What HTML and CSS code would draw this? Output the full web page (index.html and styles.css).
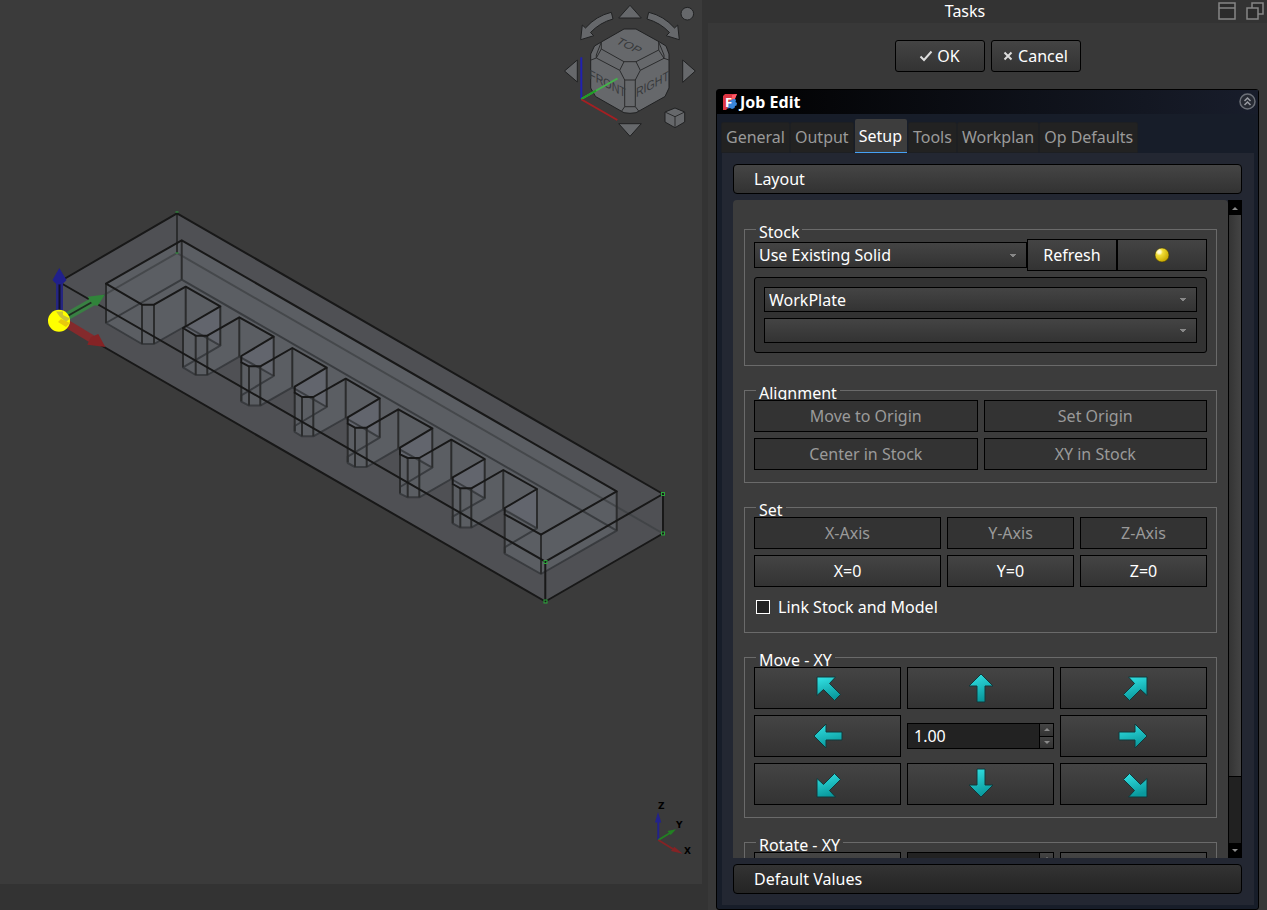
FILE: index.html
```html
<!DOCTYPE html>
<html lang="en">
<head>
<meta charset="utf-8">
<title>Job Edit</title>
<link rel="stylesheet" href="styles.css">
</head>
<body>
<div class="app">
  <main class="viewport">
    <svg class="scene" viewBox="0 0 702 884" preserveAspectRatio="xMinYMin meet" role="img" aria-label="3D view">
      <defs>
        <path id="outline" d="M181.7 240.3L106 283.7L142 304.7H154L185.7 286.7L220.3 306.3L183 328L195.7 335.7H207.3L239.3 317.3L273.7 336.7L241.3 356V362.3L249 366.3H260.3L292.3 348L326.7 367.7L294.7 386.7V392.7L302 397H313.3L345.7 378.7L379.7 398.3L347.7 417.3V423.7L355 427.7H366.7L398.3 409.3L432.3 428.3L400 447.7V454.3L407.7 458H419.3L451.3 439.7L484.7 459L452.7 477.3V484L460.3 488.3H471.3L503.3 470L537 489L504.7 508V514.3L541 534.7L616.7 491.3Z"/>
      </defs>
      <path class="stock" d="M59 282L177 213.3L663 494V533.5L545.3 601.5L59 321Z"/>
      <g class="part">
        <use href="#outline"/>
        <use href="#outline" y="39.3"/>
        <path d="M106 283.7L142 304.7H154L185.7 286.7L220.3 306.3V345.6L185.7 326L154 344H142L106 323Z"/>
        <path d="M183 328L195.7 335.7H207.3L239.3 317.3L273.7 336.7V376L239.3 356.6L207.3 375H195.7L183 367.3Z"/>
        <path d="M241.3 362.3L249 366.3H260.3L292.3 348L326.7 367.7V407L292.3 387.3L260.3 405.6H249L241.3 401.6Z"/>
        <path d="M294.7 392.7L302 397H313.3L345.7 378.7L379.7 398.3V437.6L345.7 418L313.3 436.3H302L294.7 432Z"/>
        <path d="M347.7 423.7L355 427.7H366.7L398.3 409.3L432.3 428.3V467.6L398.3 448.6L366.7 467H355L347.7 463Z"/>
        <path d="M400 454.3L407.7 458H419.3L451.3 439.7L484.7 459V498.3L451.3 479L419.3 497.3H407.7L400 493.6Z"/>
        <path d="M452.7 484L460.3 488.3H471.3L503.3 470L537 489V528.3L503.3 509.3L471.3 527.6H460.3L452.7 523.3Z"/>
        <path d="M504.7 514.3L541 534.7L616.7 491.3V530.6L541 574L504.7 553.6Z"/>
        <path d="M181.7 240.3V279.6L106 323V283.7ZM181.7 240.3L616.7 491.3V530.6L181.7 279.6Z"/>
      </g>
      <g class="wall">
        <path d="M220.3 306.3L183 328L195.7 335.7H207.3L220.3 345.6Z"/>
        <path d="M273.7 336.7L241.3 356V362.3L249 366.3H260.3L273.7 376Z"/>
        <path d="M326.7 367.7L294.7 386.7V392.7L302 397H313.3L326.7 407Z"/>
        <path d="M379.7 398.3L347.7 417.3V423.7L355 427.7H366.7L379.7 437.6Z"/>
        <path d="M432.3 428.3L400 447.7V454.3L407.7 458H419.3L432.3 467.6Z"/>
        <path d="M484.7 459L452.7 477.3V484L460.3 488.3H471.3L484.7 498.3Z"/>
        <path d="M537 489L504.7 508L537 528.3Z"/>
      </g>
      <path class="edge-faint" d="M59 321L177 253L663 533.5M177 253V213"/>
      <use class="edge-hidden" href="#outline" y="39.3"/>
      <path class="edge-side" d="M106 283.7v39.3M142 304.7v39.3M154 304.7v39.3M185.7 286.7v39.3M220.3 306.3v39.3M183 328v39.3M195.7 335.7v39.3M207.3 335.7v39.3M239.3 317.3v39.3M273.7 336.7v39.3M241.3 362v39.3M249 366.3v39.3M260.3 366.3v39.3M292.3 348v39.3M326.7 367.7v39.3M294.7 392v39.3M302 397v39.3M313.3 397v39.3M345.7 378.7v39.3M379.7 398.3v39.3M347.7 423v39.3M355 427.7v39.3M366.7 427.7v39.3M398.3 409.3v39.3M432.3 428.3v39.3M400 454v39.3M407.7 458v39.3M419.3 458v39.3M451.3 439.7v39.3M484.7 459v39.3M452.7 484v39.3M460.3 488.3v39.3M471.3 488.3v39.3M503.3 470v39.3M537 489v39.3M504.7 514v39.3M541 534.7v39.3M616.7 491.3v39.3M181.7 240.3v39.3M177 213v40"/>
      <use class="edge" href="#outline"/>
      <path class="edge" d="M59 282L177 213.3L663 494V533.5L545.3 601.5L59 321M59 282L545.3 561.7L663 494M545.3 561.7V601.5"/>
      <g class="vertex"><path d="M175.500 212h3M175.500 253h3"/><rect x="661.500" y="492.500" width="3" height="3"/><rect x="661.500" y="532" width="3" height="3"/><rect x="544" y="560.500" width="3" height="3"/><rect x="544" y="600" width="3" height="3"/></g>

      <g class="origin">
        <path d="M64 318L94 301" stroke="#398043" stroke-width="8"/>
        <path d="M64 318L94 301" stroke="#202b22" stroke-width="2"/>
        <path d="M105 294.500L87.700 296.700L93 305L97.700 305.700Z" fill="#30843a"/>
        <path d="M64 322L92 339" stroke="#842a2c" stroke-width="8"/>
        <path d="M105.300 347L98.300 334L91 337L87.300 344.700Z" fill="#852325"/>
        <path d="M59.500 283V314" stroke="#252580" stroke-width="7"/>
        <path d="M59.500 284V312" stroke="#111126" stroke-width="2"/>
        <path d="M59.300 268L52.500 280Q59 289 66.500 280Z" fill="#20208c"/>
        <circle cx="59" cy="320.700" r="11" fill="#ffff00"/>
        <path d="M56 311.500H63V315L70 318.500L66 322L60 317Z" fill="#cdc634"/>
        <path d="M61 319L70 323L66 327L58 322Z" fill="#e9c90c"/>
      </g>

      <g class="nav">
        <path d="M630 5.300L641.300 18H618.700Z"/>
        <path d="M618.700 123.700H641.300L630 136.300Z"/>
        <path d="M564.500 71L577.300 60V82Z"/>
        <path d="M682.700 60L695.300 71L682.700 82.300Z"/>
        <circle cx="687.300" cy="13.700" r="6.300"/>
        <path d="M611.300 12.300Q596 16 585.500 28L582.300 25L580.700 39.700L593.700 35.700L590.500 32.500Q600 22.500 613 19Z"/>
        <path d="M648.700 12.300Q664 16 674.500 28L677.700 25L679.300 39.700L666.300 35.700L669.500 32.500Q660 22.500 647 19Z"/>
        <path d="M624 29H636L659.500 42L666 46L669 54V88L665 96.500L636 112.700L630 113.300L624 112.700L595.500 96.500L590.700 88V54L594.500 46L601.300 42Z"/>
        <g class="nav-lines">
          <path d="M601.300 42V49L624 61.700H636L658.700 50V42"/>
          <path d="M601.300 49L596.300 58L591 60M596.300 58L619.700 70.300L624 61.700M596.300 58V55L601.300 42"/>
          <path d="M658.700 50L664 58.300L669 60M664 58.300L640.300 70.300L636 61.700M664 58.300V55L658.700 42"/>
          <path d="M619.700 70.300L624.700 80H635.300L640.300 70.300M624.700 80V106.700H635.300V80M624.700 106.700L621.700 111M635.300 106.700L638.700 111"/>
        </g>
        <path d="M675 108L684.700 112V122L675 127.700L665 122V112Z"/>
        <path class="nav-lines" d="M665 112L675 116.700L684.700 112M675 116.700V127.700"/>
        <text class="nav-text" transform="matrix(.87 .42 -.6 .6 629 46)" y="4">TOP</text>
        <text class="nav-text" transform="matrix(.82 .44 0 1 607.500 83)" y="5">FRONT</text>
        <text class="nav-text" transform="matrix(.82 -.44 0 1 652.500 83.500)" y="5">RIGHT</text>
        <g class="nav-axes">
          <path d="M581.300 99V57.300" stroke="#2020b0"/>
          <path d="M581.300 99L617.500 78.500" stroke="#44b34b"/>
          <path d="M581.300 99L596 90.700" stroke="#1f9f24"/>
          <path d="M581.500 99.500L617.300 120" stroke="#a51f22"/>
        </g>
      </g>

      <g class="axes">
        <path d="M658.300 840V820" stroke="#22228c"/><path d="M658 812L655 822.500H661.300Z" fill="#22228c"/>
        <path d="M658.300 840L670 833" stroke="#228022"/><path d="M676 829.300L667.500 831L670.700 835Z" fill="#228022"/>
        <path d="M658.300 840L673 849" stroke="#852325"/><path d="M682.700 853.700L674.300 846.700L671 851Z" fill="#852325"/>
        <text x="658" y="809">Z</text><text x="676" y="828">Y</text><text x="684" y="854">X</text>
      </g>
    </svg>
  </main>

  <aside class="dock">
    <header class="dock-title">
      <h1>Tasks</h1>
      <button class="dock-btn" type="button" aria-label="Shade"><svg width="18" height="18" viewBox="0 0 18 18"><path d="M1 1H17V17H1Z" fill="#2b2b2b" stroke="#868686" stroke-width="1.500"/><path d="M1 6H17" stroke="#868686" stroke-width="1.500"/></svg></button>
      <button class="dock-btn" type="button" aria-label="Float"><svg width="18" height="18" viewBox="0 0 18 18"><path d="M6 1H17V12H6Z" fill="#2b2b2b" stroke="#868686" stroke-width="1.500"/><path d="M1 6H12V17H1Z" fill="#2b2b2b" stroke="#868686" stroke-width="1.500"/></svg></button>
    </header>
    <div class="dock-body">
      <div class="actions">
        <button class="btn round" type="button"><svg width="14" height="12" viewBox="0 0 14 12"><path d="M1.500 6.500L5 10L12.500 1.500" fill="none" stroke="#ddd" stroke-width="2"/></svg>OK</button>
        <button class="btn round cancel" type="button"><svg width="10" height="10" viewBox="0 0 10 10"><path d="M1.500 1.500L8.500 8.500M8.500 1.500L1.500 8.500" stroke="#ddd" stroke-width="2"/></svg>Cancel</button>
      </div>

      <section class="job">
        <header class="job-head">
          <svg class="logo" width="14" height="16" viewBox="0 0 14 16"><path d="M2 0H14L12 4L10 8L5 14L3 16H0V2Z" fill="#dd3643"/><path d="M9 5.500L11.500 4.500L13 6L12.500 8L14 9L13.500 11.500L12 12L11.500 14L9 15L7 14L4.500 14.500V9Z" fill="#3a86d9"/><path d="M9 1L14 0L12 5H9Z" fill="#ff5a66"/><text x="2" y="13" class="logo-f">F</text></svg>
          <h2>Job Edit</h2>
          <button class="collapse" type="button" aria-label="Collapse"><svg width="17" height="17" viewBox="0 0 17 17"><circle cx="8.500" cy="8.500" r="7.500" fill="#262a33" stroke="#6c7078" stroke-width="1.500"/><path d="M5.500 8L8.500 5L11.500 8M5.500 12L8.500 9L11.500 12" fill="none" stroke="#999ca3" stroke-width="1.500"/></svg></button>
        </header>
        <nav class="tabs" role="tablist">
          <button type="button" role="tab">General</button>
          <button type="button" role="tab">Output</button>
          <button type="button" role="tab" aria-selected="true">Setup</button>
          <button type="button" role="tab">Tools</button>
          <button type="button" role="tab">Workplan</button>
          <button type="button" role="tab">Op Defaults</button>
        </nav>
        <div class="pane">
          <button class="section-btn" type="button">Layout</button>
          <div class="scroll">
            <div class="scroll-view">
              <fieldset class="group">
                <legend>Stock</legend>
                <div class="stock-row">
                  <select class="combo tall" aria-label="Stock source"><option>Use Existing Solid</option></select>
                  <button class="btn" type="button">Refresh</button>
                  <button class="btn" type="button" aria-label="Stock color"><svg width="16" height="16" viewBox="0 0 16 16"><defs><radialGradient id="ball" cx=".3" cy=".28" r=".75"><stop offset="0" stop-color="#fff"/><stop offset=".18" stop-color="#fff7b0"/><stop offset=".35" stop-color="#f0dc35"/><stop offset="1" stop-color="#c9a800"/></radialGradient></defs><circle cx="8" cy="8" r="7" fill="url(#ball)" stroke="#3a3200" stroke-width=".5"/></svg></button>
                </div>
                <div class="frame">
                  <select class="combo" aria-label="Solid"><option>WorkPlate</option></select>
                  <select class="combo" aria-label="Sub solid"><option></option></select>
                </div>
              </fieldset>

              <fieldset class="group">
                <legend>Alignment</legend>
                <div class="grid two">
                  <button class="btn" type="button" disabled>Move to Origin</button>
                  <button class="btn" type="button" disabled>Set Origin</button>
                  <button class="btn" type="button" disabled>Center in Stock</button>
                  <button class="btn" type="button" disabled>XY in Stock</button>
                </div>
              </fieldset>

              <fieldset class="group">
                <legend>Set</legend>
                <div class="grid set">
                  <button class="btn" type="button" disabled>X-Axis</button>
                  <button class="btn" type="button" disabled>Y-Axis</button>
                  <button class="btn" type="button" disabled>Z-Axis</button>
                  <button class="btn" type="button">X=0</button>
                  <button class="btn" type="button">Y=0</button>
                  <button class="btn" type="button">Z=0</button>
                </div>
                <label class="check"><input type="checkbox">Link Stock and Model</label>
              </fieldset>

              <fieldset class="group">
                <legend>Move - XY</legend>
                <div class="grid three">
                  <button class="btn big" type="button" aria-label="Up left"><svg class="arrow" viewBox="0 0 32 32"><defs><linearGradient id="teal" x1="0" y1="0" x2=".3" y2="1"><stop offset="0" stop-color="#34e4e6"/><stop offset="1" stop-color="#0a9a9e"/></linearGradient></defs><path d="M5 5H23.500L17.500 11.500L28.500 22.500L22.500 28.500L11.500 17.500L5 23.500Z"/></svg></button>
                  <button class="btn big" type="button" aria-label="Up"><svg class="arrow" viewBox="0 0 32 32"><path d="M16 2L28 14H20V30H12V14H4Z"/></svg></button>
                  <button class="btn big" type="button" aria-label="Up right"><svg class="arrow" viewBox="0 0 32 32"><path d="M29 5H10.500L16.500 11.500L5.500 22.500L11.500 28.500L22.500 17.500L29 23.500Z"/></svg></button>
                  <button class="btn big" type="button" aria-label="Left"><svg class="arrow" viewBox="0 0 32 32"><path d="M2 16L14 4V12H30V20H14V28Z"/></svg></button>
                  <div class="spin"><input type="text" inputmode="decimal" value="1.00" aria-label="Move distance"><span class="spin-btns"><button type="button" aria-label="Increase"><i class="tri up"></i></button><button type="button" aria-label="Decrease"><i class="tri down"></i></button></span></div>
                  <button class="btn big" type="button" aria-label="Right"><svg class="arrow" viewBox="0 0 32 32"><path d="M29 16L17 4V12H1V20H17V28Z"/></svg></button>
                  <button class="btn big" type="button" aria-label="Down left"><svg class="arrow" viewBox="0 0 32 32"><path d="M5 29H23.500L17.500 22.500L28.500 11.500L22.500 5.500L11.500 16.500L5 10.500Z"/></svg></button>
                  <button class="btn big" type="button" aria-label="Down"><svg class="arrow" viewBox="0 0 32 32"><path d="M16 29L28 17H20V1H12V17H4Z"/></svg></button>
                  <button class="btn big" type="button" aria-label="Down right"><svg class="arrow" viewBox="0 0 32 32"><path d="M29 29H10.500L16.500 22.500L5.500 11.500L11.500 5.500L22.500 16.500L29 10.500Z"/></svg></button>
                </div>
              </fieldset>

              <fieldset class="group">
                <legend>Rotate - XY</legend>
                <div class="grid three top">
                  <button class="btn big" type="button" aria-label="Rotate left"></button>
                  <div class="spin"><input type="text" inputmode="decimal" aria-label="Rotate angle"><span class="spin-btns"><button type="button" aria-label="Increase"><i class="tri up"></i></button><button type="button" aria-label="Decrease"><i class="tri down"></i></button></span></div>
                  <button class="btn big" type="button" aria-label="Rotate right"></button>
                </div>
              </fieldset>
            </div>
            <div class="scrollbar" aria-hidden="true">
              <span class="sb-end"><i class="tri up"></i></span>
              <span class="sb-thumb"></span>
              <span class="sb-track"></span>
              <span class="sb-end"><i class="tri down"></i></span>
            </div>
          </div>
          <button class="section-btn dark" type="button">Default Values</button>
        </div>
      </section>
    </div>
  </aside>
</div>
</body>
</html>
```
FILE: styles.css
```css
* { box-sizing: border-box; }

body {
  margin: 0;
  background: #333;
  color: #fff;
  font: 16px/22px "Noto Sans", sans-serif;
}

button, input, select { font: inherit; color: inherit; margin: 0; }
h1, h2 { margin: 0; font-size: 16px; }

.app {
  display: grid;
  grid-template-columns: 702fr 559fr;
  gap: 6px;
  height: 100vh;
}

/* 3D view */
.viewport { margin-bottom: 26px; background: #3b3b3b; overflow: hidden; min-width: 0; }
.scene { display: block; width: 100%; height: 100%; }
.stock { fill: #4f5054; }
.part { fill: #5b5e63; }
.wall { fill: #62656d; }
.edge, .edge-side, .edge-hidden, .edge-faint { fill: none; stroke: #181818; stroke-width: 2; stroke-linejoin: round; }
.edge-side { stroke: #2b2c2d; }
.edge-hidden { stroke: #34363a; stroke-opacity: .85; }
.edge-faint { stroke: #3c3f42; stroke-opacity: .7; }
.vertex { fill: none; stroke: #2aa53a; }
.nav > path, .nav > circle { fill: #66686b; stroke: #202122; stroke-width: 1; }
.nav > path.nav-lines, .nav-lines { fill: none; stroke: #2a2b2c; stroke-width: 1; }
.nav-text { font: 13px "Liberation Sans", sans-serif; fill: #37393b; text-anchor: middle; }
.nav-axes { fill: none; stroke-width: 2; }
.axes path { stroke-width: 2; }
.axes text { font: bold 9px "DejaVu Sans", sans-serif; fill: #000; }

/* Dock */
.dock { display: flex; flex-direction: column; min-width: 0; min-height: 0; }
.dock-title { display: flex; align-items: center; gap: 10px; height: 23px; padding: 0 3px 2px 14px; }
.dock-title h1 { flex: 1; text-align: center; font-weight: 400; }
.dock-btn, .collapse { padding: 0; border: 0; background: none; display: flex; }
.dock-body { flex: 1; min-height: 0; display: flex; flex-direction: column; padding: 17px 8px 0; background: #383838; }
.actions { display: flex; justify-content: center; gap: 6px; margin-bottom: 17px; }
.actions .btn { width: 90px; }

.btn {
  display: flex;
  align-items: center;
  justify-content: center;
  gap: 4px;
  height: 32px;
  padding: 0;
  border: 1px solid #000;
  background: linear-gradient(#444, #333);
}
.btn.round { border-radius: 3px; }
.btn.cancel { gap: 5px; }
.btn.big { height: 42px; }
.btn:disabled { background: #333; color: #9a9a9a; }

/* Job panel */
.job {
  flex: 1;
  min-height: 0;
  display: flex;
  flex-direction: column;
  border: 1px solid #000;
  border-radius: 3px;
  background: #171d29;
}
.job-head { display: flex; align-items: center; gap: 3px; height: 24px; padding: 0 2px 1px 6px; background: linear-gradient(90deg, #000, #181d2b); }
.job-head h2 { flex: 1; font-weight: 700; }
.logo-f { font: 700 13px "Noto Sans", sans-serif; fill: #fff; }

.tabs { display: flex; align-items: flex-end; height: 39px; padding: 0 4px; }
.tabs button { height: 31px; padding: 0 4px 2px; border: 1px solid #1d1f22; border-radius: 2px 2px 0 0; background: #222; color: #9a9a9a; }
.tabs button[aria-selected="true"] { height: 34px; padding: 0 5px 0 4px; border: 0; border-bottom: 1px solid #45a1f5; margin: 0 1px; background: #3d3d3d; color: #fff; }

.pane {
  flex: 1;
  min-height: 0;
  display: flex;
  flex-direction: column;
  gap: 6px;
  margin: 0 4px 4px 5px;
  padding: 11px 12px 11px 11px;
  background: #232732;
}
.section-btn {
  height: 30px;
  padding: 0 20px;
  border: 1px solid #000;
  border-radius: 4px;
  background: linear-gradient(#454545, #323232);
  text-align: left;
}
.section-btn.dark { background: linear-gradient(#333, #242424); }

.scroll { flex: 1; min-height: 0; display: flex; }
.scroll-view {
  flex: 1;
  min-width: 0;
  overflow: hidden;
  padding: 29px 11px 0;
  border-radius: 4px 4px 0 0;
  background: #3c3c3c;
}

.group { min-width: 0; margin: 0 0 24px; padding: 9px 9px 12px; border: 1px solid #6a6a6a; }
.group legend { height: 1px; margin-left: 2px; padding: 0 3px; line-height: 7px; }
.stock-row { display: grid; grid-template-columns: 1fr 90px 90px; align-items: center; margin-bottom: 6px; }
.frame { display: grid; gap: 6px; padding: 9px; border: 1px solid #000; border-radius: 3px; background: #323232; }

.combo {
  appearance: none;
  width: 100%;
  height: 25px;
  padding: 0 20px 0 4px;
  border: 1px solid #000;
  border-radius: 0;
  background:
    linear-gradient(to top right, transparent 50%, #888 50%) right 13px center / 4px 3px no-repeat,
    linear-gradient(to top left, transparent 50%, #888 50%) right 9px center / 4px 3px no-repeat,
    linear-gradient(#444, #333);
}
.combo.tall { height: 26px; }

.grid { display: grid; gap: 6px; align-items: center; }
.grid.top { align-items: start; }
.two { grid-template-columns: repeat(2, minmax(0, 1fr)); }
.three { grid-template-columns: repeat(3, minmax(0, 1fr)); }
.set { grid-template-columns: 187fr 127fr 127fr; }

.check { display: flex; align-items: center; gap: 8px; height: 27px; margin-top: 6px; padding-left: 2px; }
.check input { appearance: none; width: 14px; height: 14px; border: 1px solid #fff; background: #222; }

.arrow { width: 32px; height: 32px; overflow: visible; fill: url(#teal); stroke: #12383a; stroke-width: 1; }

.spin { display: flex; height: 26px; border: 1px solid #000; background: #222; }
.spin input { flex: 1; min-width: 0; padding: 0 6px; border: 0; background: none; }
.spin-btns { display: grid; grid-template-rows: 1fr 1fr; gap: 1px; width: 14px; padding-left: 1px; background: #000; }
.spin-btns button { display: flex; align-items: center; justify-content: center; padding: 0; border: 0; background: linear-gradient(#444, #333); }

.tri { width: 0; height: 0; border: 3px solid transparent; }
.tri.up { border-top: 0; border-bottom-color: #8a8a8a; }
.tri.down { border-bottom: 0; border-top-color: #8a8a8a; }

.scrollbar { display: flex; flex-direction: column; width: 14px; border: 1px solid #000; background: #212121; }
.sb-end { display: flex; align-items: center; justify-content: center; height: 14px; background: #000; }
.sb-thumb { flex: 562; border-bottom: 1px solid #000; background: linear-gradient(90deg, #343434, #444); }
.sb-track { flex: 66; }
```
